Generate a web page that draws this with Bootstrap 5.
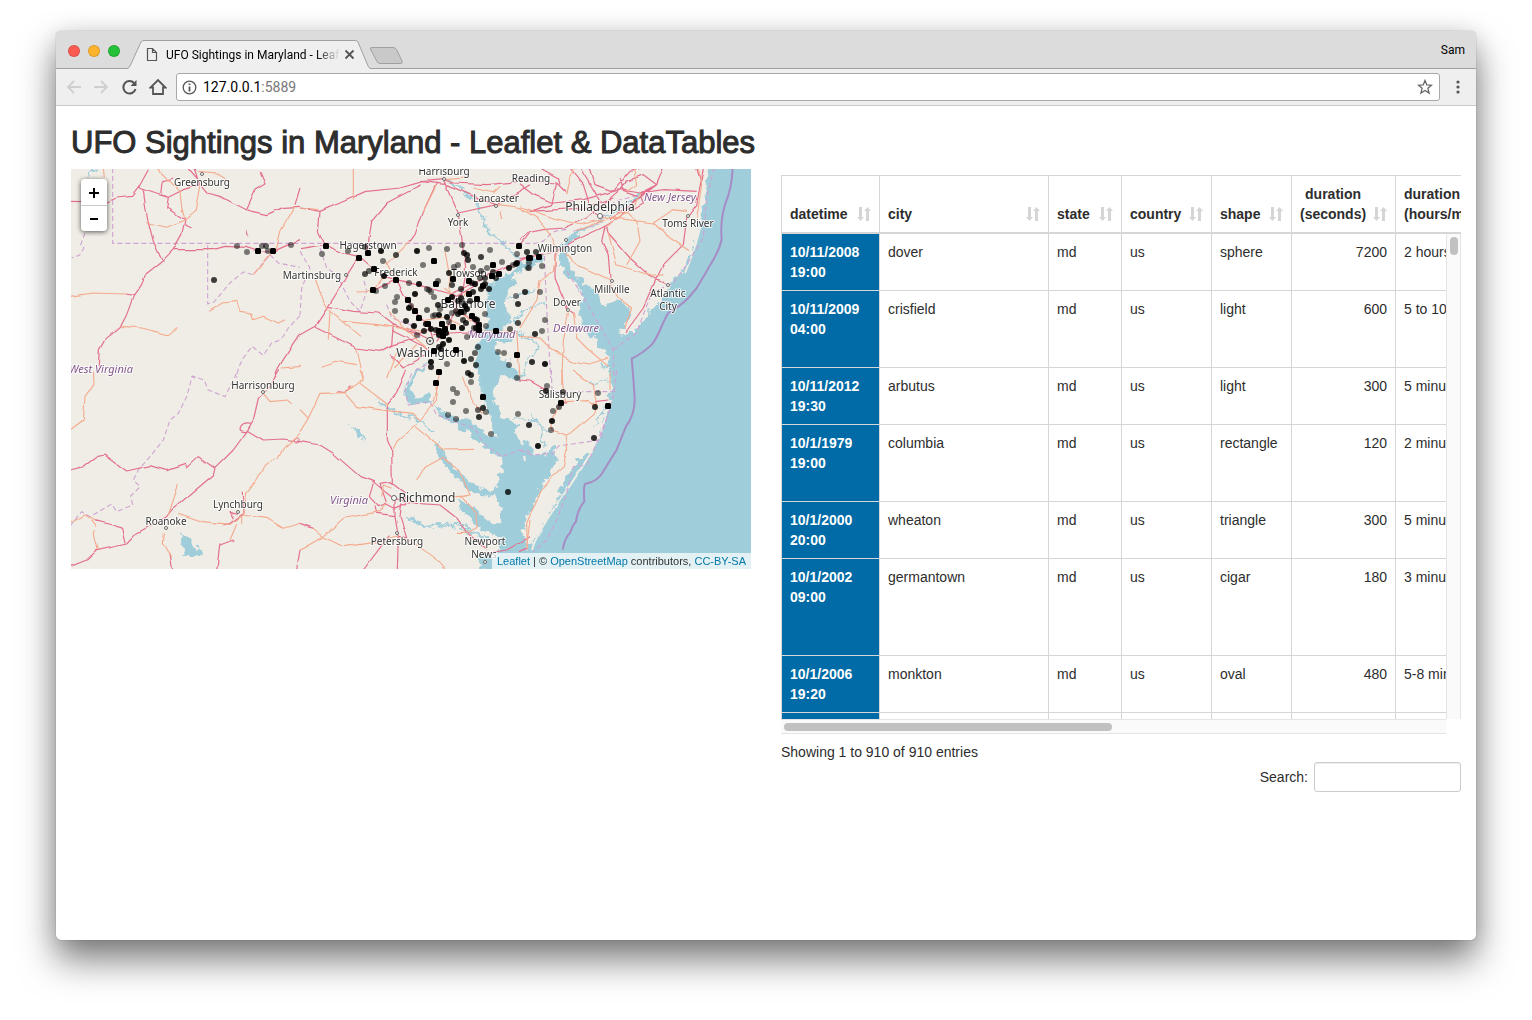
<!DOCTYPE html>
<html lang="en">
<head>
<meta charset="utf-8">
<meta name="viewport" content="width=device-width, initial-scale=1">
<title>UFO Sightings in Maryland - Leaflet &amp; DataTables</title>
<link href="https://cdn.jsdelivr.net/npm/bootstrap@5.3.0/dist/css/bootstrap.min.css" rel="stylesheet">
<style>
body{background:#fff;font-family:"Liberation Sans",Arial,sans-serif;font-size:14px;line-height:20px;color:#2d2d2d;padding:31px 56px 80px}
.browser{min-height:calc(100vh - 111px);border-radius:5px;background:#fff;box-shadow:0 0 1px rgba(0,0,0,.5),0 20px 36px rgba(0,0,0,.5),0 2px 24px rgba(0,0,0,.12)}
.tabstrip{height:38px;background:#dcdcdc;border-bottom:1px solid #a0a0a0;border-radius:5px 5px 0 0;padding:0 11px 0 12px;font-family:Roboto,sans-serif;font-size:12px;color:#000}
.light{width:12px;height:12px;border-radius:50%;border:1px solid #0002;margin-right:8px;margin-top:2px}
.pagetab{width:242px;height:29px;margin-bottom:-1px;padding:0 14px 0 18px}
.pagetab>.tabshape{position:absolute;left:0;top:0}
.tabtitle{width:174px;white-space:nowrap;overflow:hidden;font-size:12px;-webkit-mask-image:linear-gradient(90deg,#000 86%,transparent);mask-image:linear-gradient(90deg,#000 86%,transparent)}
.toolbar{height:37px;background:#efefef;border-bottom:1px solid #cacaca;padding:0 12px 0 9px}
.plain{border:0;background:none;padding:0;display:flex;line-height:1}
.navkeys{gap:11px}
.address{height:28px;border:1px solid #a9a9a9;border-radius:3px;background:#fff;padding:0 6px 0 5px;margin:0 12px 0 9px}
.address a{font-family:Roboto,sans-serif;font-size:14px;color:#000;text-decoration:none;margin-left:6px}
.address span{color:#777}
.pagebody{padding:20px 15px}
h2{font-size:31px;line-height:33px;font-weight:400;margin:0 0 10px;-webkit-text-stroke:1px #2d2d2d}
.split{--bs-gutter-x:30px}
.map{height:400px;overflow:hidden;background:#efede5}
.zoomctl{left:10px;top:10px;width:26px;border-radius:4px;overflow:hidden;box-shadow:0 1px 5px rgba(0,0,0,.65)}
.zoomctl button{width:26px;height:26px;border:0;background:#fff;padding:6px}
.zoomctl button+button{border-top:1px solid #ccc}
.credit{right:0;bottom:0;background:rgba(255,255,255,.7);padding:0 5px;font-size:11px;line-height:16px;color:#333}
.credit a{color:#0078a8;text-decoration:none}
.land text{font-family:"Noto Sans",sans-serif;font-size:10px;fill:#333;text-anchor:middle;paint-order:stroke;stroke:#fffc;stroke-width:2px;stroke-linejoin:round}
.land text.big{font-size:12px}
.land text.region{font-style:italic;fill:#83568c;font-size:11px}
.sea{fill:#a0cdda}
.creek{fill:none;stroke:#a0cdda;stroke-width:2}
.road path,.lines path{fill:none;vector-effect:non-scaling-stroke;stroke-linejoin:round}
.m{stroke:#e4708c;stroke-width:1.2px}
.t{stroke:#f5aa8d;stroke-width:1.1px}
.d{stroke:#cfa3d3;stroke-width:1.1px;stroke-dasharray:5 3}
.e{stroke:#a58cc5;stroke-width:2px}
.gridbox{margin-top:6px}
.gridclip{overflow:hidden}
.sights{width:820px;table-layout:fixed;border-collapse:separate;border-spacing:0;margin:0}
.sights th,.sights td{padding:8px;border-left:1px solid #d6d6d6;border-bottom:1px solid #d6d6d6;vertical-align:top;height:57px}
.sights thead th{height:59px;border-top:1px solid #d6d6d6;border-bottom-width:2px;vertical-align:bottom}
.sights tbody th{background:#006ba6;color:#fff;background-clip:padding-box;padding-right:14px}
.sights .mid td{height:77px}.sights .tall td{height:97px}
.sights thead .sortable{display:flex;justify-content:space-between;align-items:flex-end}
.sights thead .text-end .sortable{text-align:center}
.sortable svg{margin-bottom:2px}
.viewport{height:485px}
.vbar{width:15px;background:#fafafa;border-left:1px solid #e5e5e5;border-right:1px solid #e5e5e5;padding:3px}
.vbar div{height:18px;width:8px;border-radius:4px;background:#c1c1c1}
.hbar{height:15px;background:#fafafa;border-top:1px solid #e5e5e5;border-bottom:1px solid #e5e5e5;margin-right:15px;padding:3px}
.hbar div{height:8px;width:49.7%;border-radius:4px;background:#c1c1c1}
.info{padding-top:8px}
.find input{width:147px;height:30px;border:1px solid #ccc;border-radius:3px;box-shadow:inset 0 1px 1px rgba(0,0,0,.075);margin-left:6px;padding:5px 10px}
</style>
<script src="https://cdn.jsdelivr.net/npm/bootstrap@5.3.0/dist/js/bootstrap.bundle.min.js"></script>
</head>
<body>
<div class="browser">
<header>
<div class="tabstrip d-flex align-items-center">
<span class="light" style="background:#fc5b52"></span><span class="light" style="background:#fdb32b"></span><span class="light" style="background:#25c138"></span>
<div class="pagetab position-relative d-flex align-items-center align-self-end">
<svg class="tabshape" width="242" height="30"><path d="M0 29L2 26 13 2Q14 .5 16 .5H227Q229 .5 230 2L240 26 242 29V30H0z" fill="#efefef"/><path d="M0 28.500L2 26 13 2Q14 .5 16 .5H227Q229 .5 230 2L240 26 242 28.500" fill="none" stroke="#a0a0a0"/></svg>
<svg class="position-relative flex-shrink-0 me-2" width="12" height="15" fill="none" stroke="#555" stroke-width="1.200"><path d="M1.500 1.500h5l4 4v8h-9zM6.500 1.500v4h4"/></svg>
<span class="tabtitle position-relative">UFO Sightings in Maryland - Leaflet</span>
<button class="plain position-relative ms-1" aria-label="Close tab"><svg width="11" height="11" stroke="#555" stroke-width="1.800"><path d="M1.500 1.500l8 8M9.500 1.500l-8 8"/></svg></button>
</div>
<svg class="mt-2 pt-1" width="36" height="22"><path d="M-2.500 2Q-3 .5 -1 .5H20Q22.500 .5 23.500 2.500L29 14Q30 16.500 28 16.500H7Q5 16.500 4 14.500z" transform="translate(3)" fill="#c9c9c9" stroke="#a0a0a0"/></svg>
<span class="ms-auto">Sam</span>
</div>
<div class="toolbar d-flex align-items-center">
<div class="navkeys d-flex">
<button class="plain" aria-label="Back"><svg width="17" height="18" fill="none" stroke="#cfcfcf" stroke-width="1.800"><path d="M16 9H3M9 3L3 9l6 6"/></svg></button>
<button class="plain" aria-label="Forward"><svg width="17" height="18" fill="none" stroke="#cfcfcf" stroke-width="1.800"><path d="M1 9H14M8 3l6 6-6 6"/></svg></button>
<button class="plain" aria-label="Reload"><svg width="17" height="18" fill="none" stroke="#555" stroke-width="2"><path d="M14.500 11A6.200 6.200 0 1 1 13 5"/><path d="M15.500 2v6H9.500z" fill="#555" stroke="none"/></svg></button>
<button class="plain" aria-label="Home"><svg width="18" height="18" fill="none" stroke="#555" stroke-width="1.800"><path d="M4 9.500H1.500L9 2l7.500 7.500H14V16H4z"/></svg></button>
</div>
<div class="address d-flex align-items-center flex-grow-1">
<svg width="15" height="15" fill="none" stroke="#555" stroke-width="1.300"><circle cx="7.500" cy="7.500" r="6.300"/><path d="M7.500 6.500V11.500M7.500 3.500v1.600" stroke-width="1.800"/></svg>
<a href="#">127.0.0.1<span>:5889</span></a>
<button class="plain ms-auto" aria-label="Bookmark"><svg width="16" height="16" fill="none" stroke="#666" stroke-width="1.300"><path d="M8 1.500l1.800 4.400 4.700.3-3.600 3.100 1.200 4.700L8 11.500 3.900 14l1.200-4.700L1.500 6.200l4.700-.3z"/></svg></button>
</div>
<button class="plain" aria-label="Menu"><svg width="12" height="16" fill="#555"><circle cx="6" cy="3" r="1.600"/><circle cx="6" cy="8" r="1.600"/><circle cx="6" cy="13" r="1.600"/></svg></button>
</div>
</header>
<main class="pagebody">
<h2>UFO Sightings in Maryland - Leaflet &amp; DataTables</h2>
<div class="row split">
<div class="col-6">
<div class="map position-relative">
<svg class="land" width="100%" height="400" viewBox="71 169 680 400" preserveAspectRatio="xMidYMid slice">
<defs>
<filter id="shore" filterUnits="userSpaceOnUse" x="60" y="150" width="710" height="440"><feTurbulence type="fractalNoise" baseFrequency=".14" numOctaves="4" seed="4"/><feDisplacementMap in="SourceGraphic" scale="11" xChannelSelector="R" yChannelSelector="G"/></filter>
<filter id="bend" filterUnits="userSpaceOnUse" x="60" y="150" width="710" height="440"><feTurbulence type="fractalNoise" baseFrequency=".07" numOctaves="1" seed="7"/><feDisplacementMap in="SourceGraphic" scale="4" xChannelSelector="R" yChannelSelector="G"/></filter>
</defs>
<path fill="#efede5" d="M71 169h680v400H71z"/>
<g filter="url(#shore)">
<path class="sea" d="M709 160L706 190 703 210 699 228 693 248 687 265 672 281 664 296 653 308 645 320 635 330 620 336 619 330 627 323 632 311 622 301 605 305 593 291 577 276 568 265 566 250 571 241 583 231 592 227 582 228 569 236 562 246 560 257 563 271 578 286 582 300 579 315 590 335 600 348 608 354 610 390 608 407 603 425 597 440 592 450 578 460 565 480 556 500 545 520 536 538 528 547 528 590 780 590 780 150z"/>
<g transform="translate(400 240) scale(.33333)">
<path class="sea" d="M440 45L385 60 350 80 325 105 290 115 265 145 255 200 265 240 245 290 230 320 228 370 240 430 250 480 265 530 288 590 262 590 235 560 200 530 130 520 90 482 60 495 25 490 12 460 30 410 65 380 70 388 45 410 30 440 45 478 85 460 105 500 120 530 150 545 210 580 250 620 300 650 305 690 290 745 265 755 220 730 170 690 140 650 120 610 105 610 125 660 160 705 210 755 280 770 300 790 305 850 270 850 220 800 170 780 200 830 250 870 300 895 300 930 240 950 240 990 415 1000 385 930 372 900 370 860 400 790 440 720 470 660 460 620 440 640 410 650 385 600 360 610 350 560 310 530 280 480 280 440 310 400 350 425 375 405 330 375 290 340 290 300 340 310 310 270 330 240 305 180 350 130 335 110 370 90 430 60z"/>
<path class="creek" style="vector-effect:non-scaling-stroke;stroke-width:1.500px" d="M340 245L380 210 430 190M345 280L400 295 410 330 375 370 370 410M305 180L350 170 400 150M340 530L400 540 450 580M430 620L420 560 395 520M560 430L620 420M600 375L640 385M575 560L600 530 620 500M300 760L250 770M20 830L90 860 150 850 220 880"/>
</g>
<path class="sea" d="M180 532l6 5 7 8 10 7-9 6-8-3-5 0 3-5zM350 426l9 4 8 13-8-6z"/>
<path class="creek" d="M448 180Q478 198 483 218T505 243L522 265M378 400L398 414 415 418 432 432M88 175l8-8M408 380L418 373 428 360M592 227L620 208 640 195M404 516L423 525 447 527 460 523 478 534 492 540"/>
</g>
<g fill="none" stroke="#efede5" stroke-width="2" filter="url(#bend)"><path d="M701 225L694 250 685 273M611 400Q603 430 594 447T560 500 532 550M518 433l5 12M524 455l1 5"/></g>
<g class="lines">
<g transform="translate(70 168) scale(.33333)"><path class="d" d="M128 0V226H1390Q1420 226 1435 205T1490 185"/><path class="d" d="M413 232V408L432 402 480 345 520 312 550 320 600 260 625 285 690 298M45 195L32 230 42 240 28 262 5 270M690 443L655 480 640 505 625 518 605 525 580 562 546 535 520 570 505 600 500 630M365 625l10 5"/></g>
<g transform="translate(300 168) scale(.33333)"><path class="d" d="M0 250L30 300 5 360 0 440M60 240L80 300 110 320 150 400 180 430 200 370 190 330M260 410L275 450 330 470 360 510M380 590L340 610"/></g>
<g transform="translate(520 168) scale(.33333)"><path class="d" d="M72 240L80 420 92 630M140 310L180 370 280 545 282 630M280 545L320 515 350 495 370 440 395 375 460 345 500 290 550 210 560 90 582 0M160 190L230 170 285 100 360 80"/><path class="e" d="M638 0Q636 60 615 110Q600 160 605 215C595 260 575 280 560 310L530 360 505 390Q480 415 445 435C425 465 420 500 395 530Q370 555 335 572L340 630 344 690Q345 740 318 775Q300 820 290 845L250 910Q235 940 195 948 190 960 193 1000 172 1025 168 1060 155 1075 150 1095 135 1108 128 1145 110 1158"/></g>
<g transform="translate(70 370) scale(.33333)"><path class="d" d="M0 468L35 425 60 440 125 402 140 425 188 405 182 378 210 350 190 330 205 300 240 260 280 210 300 150 325 130 350 80 367 18 402 30 415 60 465 80 485 40 502 5"/></g>
<g transform="translate(300 370) scale(.33333)"><path class="d" d="M335 10L315 60 325 105 390 95 410 135 480 160 525 175 550 220 605 260 660 240 690 245"/></g>
<g transform="translate(520 370) scale(.33333)"><path class="d" d="M0 240L35 255 100 250 115 228 240 210 262 140 282 70 290 0M94 0L96 65H285M262 140L230 220 200 285 160 290 140 370 110 450 80 510 40 545"/></g>
</g>
<g class="road" filter="url(#bend)">
<g transform="translate(70 168) scale(.33333)">
<path class="m" d="M0 100L110 102 140 90 185 85 205 60 235 5M205 60L220 70 232 150 250 220 275 275M205 60L260 78 295 88 340 65 390 50 375 0M390 50L410 75 450 85 535 128 590 140 640 118 690 115M530 125L560 60 585 45 570 10M280 35L275 80 295 88 290 120 345 155 335 200 310 245 278 278 225 320 215 350 190 385 170 440 152 475 105 515 88 545 85 590 90 606M310 245H430L465 235 530 238 575 252 610 250 690 215M165 378L192 383M690 500L640 575 625 600 615 630M530 185l5 20M275 40L310 30M675 110L690 60M345 170L365 180M355 0L385 35"/>
<path class="t" d="M100 0L103 28M260 0L300 40 330 70 335 120 345 155 375 130 390 50M225 162L290 178 345 155M0 385L70 375 165 378M155 475L215 480 295 500 322 478M418 430L460 405 500 400 510 430 545 435 550 455 580 445 625 465 645 455M550 320L600 260 620 240 632 190 675 115M635 600L690 595M385 10L440 15 480 40"/></g>
<g transform="translate(300 168) scale(.33333)">
<path class="m" d="M0 120L60 130 120 105 200 70 300 60 370 40 430 35 460 45 560 50 690 38M430 35L475 135 485 210 497 300 480 400 440 480 410 520M360 40L440 50 510 80 590 112M475 135L590 110 640 80 690 50M60 130L55 190 78 235M0 245L78 232 130 255 175 265 220 305 250 325 290 335 370 355 450 378 520 345 560 320 610 300 690 265M410 45L370 130 345 200 330 220M365 50L260 105 215 160 200 260M175 265L140 320 110 375 85 415 45 475 0 500M85 415L160 430 235 435 280 470 275 530 240 550 170 540 130 520 45 478M225 365L290 335 320 395 345 430 390 480 400 520M530 350L470 385 450 378 480 430 520 460 540 490M400 520L360 500 320 480M400 500L450 495 540 490M280 490L380 540 400 560M690 190L660 230M270 560L310 600 380 560M280 470L350 500 395 480M240 550L280 530 350 510"/>
<path class="t" d="M160 0V95M0 120L55 125M430 35L500 30M520 60L580 75 600 55M590 112L650 120 690 130M370 130L410 50M330 220L260 290M435 250L450 330 445 378M260 280L290 335M45 330L70 400 90 430 85 515M90 430L180 505M170 540L190 630M65 595L110 580 170 590M130 460L230 470 370 490M250 325L225 360 170 375M270 430L310 480 380 540M290 550L260 630M350 530L280 600M370 460L440 450 480 470M500 370L470 420 510 460M455 380L430 360M650 490L660 630M600 130L605 155M540 490L640 490"/></g>
<g transform="translate(520 168) scale(.33333)">
<path class="m" d="M0 50L40 80 100 105 190 95 300 65 360 75 410 50 430 0M0 35L50 40 110 45 140 75M60 0L115 30 120 50M110 45L95 110 30 130 190 120 280 90M150 0L190 50 215 130 240 145 M180 0L240 100M210 0L225 50 280 70 330 10 360 0M300 65L320 40 370 20 410 50 340 100 300 150 245 180 160 220 110 250 0 272M0 215L20 195 70 185 130 180 200 150 300 65M260 175L265 195 330 270 390 325 440 350M255 175L245 220 265 260 270 330M125 240L105 260 105 330 145 425 160 435M315 495L370 420 410 330 430 290 490 230 500 150 530 110 550 0M410 50L360 80 370 105 335 125M360 75L430 65 530 70M270 155L330 110 410 50M300 30L310 70 350 85M530 0L545 50"/>
<path class="t" d="M0 120L50 150 90 200 110 250 100 310 60 340 50 400 0 480M130 245L170 290 270 335M270 345L295 390 335 420 315 480M170 190L320 130 350 160 360 220 320 290M240 145L400 165 460 125 500 130M265 195L290 290 400 325 430 320M400 165L450 210 510 250M160 435L170 510 200 540 265 595M145 435L130 520 125 650M0 505L60 510 90 540 150 580 200 590 265 570M530 150L545 50 535 0M340 0L350 50 320 70M245 155L180 170 100 150 0 115M140 75L160 0M260 175L340 120 360 75"/></g>
<g transform="translate(70 370) scale(.33333)">
<path class="m" d="M0 300L40 290 80 260 105 255 170 303 240 287 290 302 345 283 350 293 385 260 435 295M630 0L600 50 565 85 550 150 530 185 490 240 435 295 430 315 365 370 305 420 290 440 200 490 170 522 80 542 50 570 0 590M530 180L580 210 640 207 690 215M75 452L130 465 155 475 165 520M690 540L680 600M520 365L522 430 480 460 460 465M450 520L440 600M500 430L480 425 490 445M545 160Q520 155 512 170T530 185M490 510L450 525M300 550L308 600"/>
<circle cx="680" cy="211" r="8" fill="none" stroke="#e4708c" stroke-width="3"/>
<path class="t" d="M70 5L72 40 45 80 40 150 0 180M580 70L600 95 655 90 665 98M295 435L310 390 325 345M325 430L400 455 480 463 520 435 590 445 640 475 690 460M520 435L530 370 560 330 590 280 625 265 640 235 690 190M0 460L45 435 75 452M85 540L75 500 72 480M515 440V462M500 463L480 510M283 490L280 520 305 560M65 452L78 470"/></g>
<g transform="translate(300 370) scale(.33333)">
<path class="m" d="M320 0L290 70 262 105 262 210 275 240 277 340M0 215L60 225 100 250 180 320 220 335 255 365 280 385 350 400 420 405 465 440 500 490 560 540M220 340L208 380 235 410 260 400 250 370 240 340 270 335 315 370 320 400 285 415 255 400M285 380V440L295 500 292 600M265 500L190 600M305 400L300 440 320 500 295 500M0 460L40 475M560 550L620 540 690 500M225 410L230 430 285 437M110 65L130 68 155 50"/>
<path class="t" d="M180 0L190 30 160 50 130 68 60 70 25 145 0 185M180 40L265 105M130 65L170 110 260 122 340 130 360 150 410 90 405 50M350 160L290 215 280 240M345 170L430 240 520 238M350 330L370 295 430 262 480 305 510 375 480 380 500 400 530 430M0 540L70 500 130 445 240 425 260 400M0 118L25 145M70 500L130 530 220 518 295 500M320 505L400 560 435 600M40 475L70 500M465 380L500 378M420 0L400 95M490 20L520 100 550 130M275 355L250 345 245 380M530 430L535 470 500 490 470 490M690 450L680 530"/></g>
<g transform="translate(520 370) scale(.33333)">
<path class="m" d="M0 30L30 33 78 60M120 95L140 100M225 95L265 90M0 545L22 535"/>
<path class="t" d="M125 0L133 95 205 92 230 105 225 125 185 160 150 190 135 195 95 180 98 150 120 100M160 0L220 45 230 105M135 195L140 240 130 290 90 325 50 390 20 460 22 535M270 0V60"/></g>
</g>
<g fill="#fff" stroke="#666"><circle cx="202" cy="174" r="1.500"/><circle cx="444" cy="179" r="1.500"/><circle cx="496" cy="206" r="1.500"/><circle cx="458" cy="215" r="1.500"/><circle cx="600" cy="216" r="2.500"/><circle cx="566" cy="240" r="1.500"/><circle cx="688" cy="216" r="1.500"/><circle cx="612" cy="281" r="1.500"/><circle cx="668" cy="285" r="1.500"/><circle cx="568" cy="310" r="1.500"/><circle cx="346" cy="275" r="1.500"/><circle cx="263" cy="392" r="1.500"/><circle cx="238" cy="512" r="1.500"/><circle cx="166" cy="528" r="1.500"/><circle cx="394" cy="498" r="2.500"/><circle cx="397" cy="533" r="1.500"/><circle cx="485" cy="562" r="1.500"/><circle cx="430" cy="341" r="3.500" stroke="#333"/><circle cx="430" cy="341" r="1" fill="#333"/></g>
<g><text x="202" y="186">Greensburg</text><text x="444" y="175">Harrisburg</text><text x="531" y="182">Reading</text><text x="496" y="202">Lancaster</text><text x="458" y="226">York</text><text class="big" x="600" y="211">Philadelphia</text><text class="region" x="670" y="201">New Jersey</text><text x="688" y="227">Toms River</text><text x="368" y="249">Hagerstown</text><text x="312" y="279">Martinsburg</text><text x="396" y="276">Frederick</text><text x="469" y="277">Towson</text><text class="big" x="468" y="308">Baltimore</text><text class="big" x="430" y="357">Washington</text><text class="region" x="492" y="338">Maryland</text><text x="565" y="252">Wilmington</text><text x="612" y="293">Millville</text><text x="567" y="306">Dover</text><text class="region" x="576" y="332">Delaware</text><text x="668" y="297">Atlantic</text><text x="668" y="310">City</text><text class="region" x="101" y="373">West Virginia</text><text x="263" y="389">Harrisonburg</text><text x="560" y="398">Salisbury</text><text x="238" y="508">Lynchburg</text><text x="166" y="525">Roanoke</text><text class="region" x="349" y="504">Virginia</text><text class="big" x="427" y="502">Richmond</text><text x="397" y="545">Petersburg</text><text x="485" y="545">Newport</text><text x="484" y="558">News</text></g>
<g id="sightings"></g>
</svg>
<div class="zoomctl position-absolute"><button class="d-flex" aria-label="Zoom in"><svg width="14" height="14" stroke="#000" stroke-width="2"><path d="M2 8h10M7 3v10"/></svg></button><button class="d-flex" aria-label="Zoom out"><svg width="14" height="14" stroke="#000" stroke-width="2"><path d="M3 7h8"/></svg></button></div>
<div class="credit position-absolute"><a href="#">Leaflet</a> | © <a href="#">OpenStreetMap</a> contributors, <a href="#">CC-BY-SA</a></div>
</div>
</div>
<div class="col-6">
<div class="gridbox">
<div class="gridclip"><table class="sights"><colgroup><col style="width:98px"><col style="width:169px"><col style="width:73px"><col style="width:90px"><col style="width:80px"><col style="width:104px"><col></colgroup>
<thead><tr><th><div class="sortable">datetime</div></th><th><div class="sortable">city</div></th><th><div class="sortable">state</div></th><th><div class="sortable">country</div></th><th><div class="sortable">shape</div></th><th class="text-end"><div class="sortable">duration<br>(seconds)</div></th><th>duration<br>(hours/min)</th></tr></thead></table></div>
<div class="d-flex viewport"><div class="gridclip flex-grow-1"><table class="sights"><colgroup><col style="width:98px"><col style="width:169px"><col style="width:73px"><col style="width:90px"><col style="width:80px"><col style="width:104px"><col></colgroup>
<tbody>
<tr><th>10/11/2008 19:00</th><td>dover</td><td>md</td><td>us</td><td>sphere</td><td class="text-end">7200</td><td>2 hours</td></tr>
<tr class="mid"><th>10/11/2009 04:00</th><td>crisfield</td><td>md</td><td>us</td><td>light</td><td class="text-end">600</td><td>5 to 10</td></tr>
<tr><th>10/11/2012 19:30</th><td>arbutus</td><td>md</td><td>us</td><td>light</td><td class="text-end">300</td><td>5 minutes</td></tr>
<tr class="mid"><th>10/1/1979 19:00</th><td>columbia</td><td>md</td><td>us</td><td>rectangle</td><td class="text-end">120</td><td>2 minutes</td></tr>
<tr><th>10/1/2000 20:00</th><td>wheaton</td><td>md</td><td>us</td><td>triangle</td><td class="text-end">300</td><td>5 minutes</td></tr>
<tr class="tall"><th>10/1/2002 09:00</th><td>germantown</td><td>md</td><td>us</td><td>cigar</td><td class="text-end">180</td><td>3 minutes</td></tr>
<tr><th>10/1/2006 19:20</th><td>monkton</td><td>md</td><td>us</td><td>oval</td><td class="text-end">480</td><td>5-8 minutes</td></tr>
<tr><th></th><td></td><td></td><td></td><td></td><td></td><td></td></tr>
</tbody></table></div><div class="vbar flex-shrink-0"><div></div></div></div>
<div class="hbar"><div></div></div>
<div class="info">Showing 1 to 910 of 910 entries</div>
<div class="find d-flex justify-content-end align-items-center"><label for="q">Search:</label><input id="q" type="search"></div>
</div>
</div>
</div>
</main>
</div>
<script>
// Sort arrows for every sortable column header
document.querySelectorAll('.sortable').forEach(function(h){
  var label=document.createElement('span');
  while(h.firstChild)label.appendChild(h.firstChild);
  h.appendChild(label);
  h.insertAdjacentHTML('beforeend','<svg width="14" height="16" viewBox="0 0 14 16" fill="#d5d5d5"><path d="M2 1h3v10h2l-3.500 4L0 11h2zM9 15V5H7l3.500-4L14 5h-2v10z"/></svg>');
});
// Sightings grouped by tile: x, y (tile pixels), opacity
var tiles=[
 [70,168,[[501,234,.5],[530,252,.5],[564,249,1],[575,234,.5],[587,234,.6],[593,249,.5],[609,249,1],[663,231,.5],[432,336,.75]]],
 [300,168,[[78,234,1],[66,258,.5],[143,249,.5],[177,270,1],[204,255,1],[194,238,.6],[243,249,.9],[249,279,.5],[288,261,.7],[351,249,.9],[387,240,.5],[441,243,.5],[486,231,.5],[369,291,.5],[402,279,1],[492,255,.8],[501,262,.8],[504,276,.8],[543,267,.75],[570,246,.5],[657,234,1],[651,258,.5],[681,252,.5],[687,270,1],[685,300,.5],[606,282,.5],[579,291,1],[519,297,.5],[543,309,.6],[561,300,.5],[474,290,.5],[462,298,.5],[447,315,.8],[459,333,1],[222,303,1],[208,310,.6],[195,318,.7],[252,324,.9],[288,336,1],[255,354,.5],[219,366,1],[228,369,.5],[327,345,.5],[357,348,.9],[408,348,1],[414,339,.6],[291,387,.5],[285,402,.5],[285,429,.5],[345,378,.9],[380,363,.5],[387,366,.5],[402,387,.5],[393,372,.5],[324,396,1],[333,414,.5],[327,420,.9],[345,429,1],[381,426,.6],[357,450,1],[318,459,.8],[342,474,.9],[378,468,.9],[384,468,1],[393,483,.9],[372,489,.8],[351,501,.5],[399,444,.5],[417,441,.9],[414,411,.8],[426,468,1],[441,447,.9],[459,477,1],[435,483,1],[417,489,1],[429,492,1],[408,486,.8],[417,501,.9],[429,504,1],[438,495,.9],[447,516,.9],[429,528,.9],[417,537,.8],[402,549,1],[423,543,.8],[468,546,1],[456,351,.7],[483,363,.7],[456,387,.9],[444,396,1],[483,390,.8],[474,399,.7],[507,378,1],[519,372,.8],[507,339,1],[516,345,.7],[525,348,.9],[549,354,1],[555,348,.8],[567,363,.8],[543,363,.8],[576,324,1],[597,318,1],[588,330,.7],[579,312,.7],[627,300,.9],[651,285,.9],[639,291,.5],[648,288,.8],[531,393,1],[510,399,.7],[495,414,.9],[501,423,.9],[483,432,1],[474,438,.8],[492,432,.7],[516,444,1],[525,453,.9],[531,456,.9],[555,438,.5],[537,471,1],[537,486,1],[528,480,.8],[558,474,.5],[588,489,1],[501,507,.5],[486,480,.9],[498,465,.8],[489,456,.7],[468,429,.6],[456,435,.5],[447,462,.5],[654,408,.8],[648,384,.5],[675,372,.8],[654,465,.7],[651,561,1],[630,483,.6],[594,552,.5],[612,555,.5],[627,591,.5],[393,582,.9],[393,597,.8],[417,612,1],[441,588,.5],[492,579,.9],[513,573,.7],[525,555,.6],[534,537,.6],[528,590,.7],[504,615,.8],[513,621,.8],[555,330,.7],[540,330,.6],[420,423,.5],[405,440,.5],[489,405,.6],[522,480,.6],[650,630,.5]]],
 [520,168,[[21,252,.5],[48,252,.7],[57,267,1],[30,270,1],[27,285,.5],[27,300,.5],[66,294,.5],[60,372,.5],[75,456,.5],[66,489,.5],[45,498,.8],[36,582,.8],[75,588,.9]]],
 [300,370,[[408,39,1],[459,57,.5],[471,69,.5],[459,96,.5],[513,36,.5],[549,81,1],[549,114,.8],[534,120,.6],[558,126,.5],[537,141,.8],[498,123,.5],[444,135,.5],[468,147,.5],[573,192,.5],[654,132,.5],[624,366,.8]]],
 [520,370,[[81,48,.5],[78,63,.8],[129,66,.6],[123,99,1],[117,110,.6],[99,123,.5],[96,153,.9],[93,180,.5],[54,228,.9],[28,166,.8],[222,204,.8],[225,111,.8],[264,108,1],[234,69,.5]]]
],out='';
tiles.forEach(function(t){t[2].forEach(function(p){
  var x=Math.round(t[0]+p[0]/3),y=Math.round(t[1]+p[1]/3);
  out+=p[2]===1?'<rect x="'+(x-3)+'" y="'+(y-3)+'" width="6" height="6" rx="1.5"/>':'<circle cx="'+x+'" cy="'+y+'" r="3" opacity="'+p[2]+'"/>';
});});
document.getElementById('sightings').innerHTML=out;
</script>
</body>
</html>
